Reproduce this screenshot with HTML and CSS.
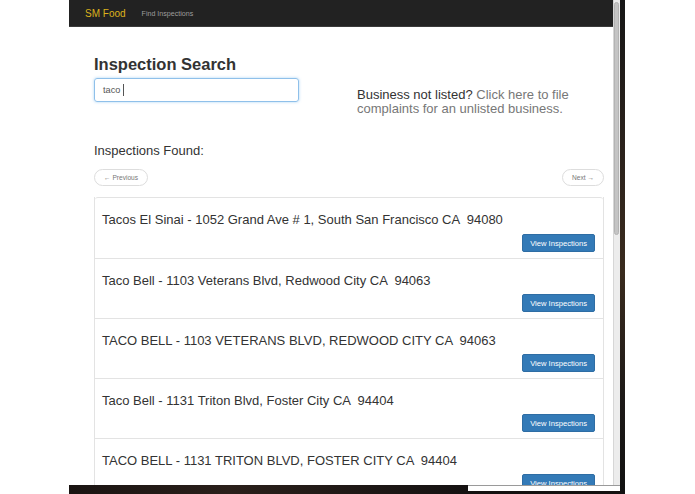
FILE: index.html
```html
<!DOCTYPE html>
<html>
<head>
<meta charset="utf-8">
<link rel="stylesheet" href="styles.css">
</head>
<body>
<div class="screen">
  <div class="gutter"></div>
  <div class="window">
    <div class="main">
      <div class="browser">
        <div class="viewport">
          <div class="navbar">
            <span class="brand">SM Food</span>
            <span class="navlink">Find Inspections</span>
          </div>
          <div class="container">
            <div class="search-row">
              <div class="search-col">
                <h2 class="title">Inspection Search</h2>
                <div class="input"><span class="val">taco</span><span class="caret"></span></div>
              </div>
              <p class="notlisted"><span class="dark">Business not listed?</span> Click here to file complaints for an unlisted business.</p>
            </div>
            <div class="found">Inspections Found:</div>
            <div class="pager">
              <span class="pill">&larr; Previous</span>
              <span class="pill">Next &rarr;</span>
            </div>
            <div class="list">
              <div class="item">
                <div class="name">Tacos El Sinai - 1052 Grand Ave # 1, South San Francisco CA  94080</div>
                <div class="actions"><span class="btn">View Inspections</span></div>
              </div>
              <div class="item">
                <div class="name">Taco Bell - 1103 Veterans Blvd, Redwood City CA  94063</div>
                <div class="actions"><span class="btn">View Inspections</span></div>
              </div>
              <div class="item">
                <div class="name">TACO BELL - 1103 VETERANS BLVD, REDWOOD CITY CA  94063</div>
                <div class="actions"><span class="btn">View Inspections</span></div>
              </div>
              <div class="item">
                <div class="name">Taco Bell - 1131 Triton Blvd, Foster City CA  94404</div>
                <div class="actions"><span class="btn">View Inspections</span></div>
              </div>
              <div class="item">
                <div class="name">TACO BELL - 1131 TRITON BLVD, FOSTER CITY CA  94404</div>
                <div class="actions"><span class="btn">View Inspections</span></div>
              </div>
            </div>
          </div>
        </div>
        <div class="scrollbar"><div class="thumb"></div></div>
      </div>
      <div class="bottom">
        <div class="bottom-dark"></div>
        <div class="bottom-white"></div>
      </div>
    </div>
    <div class="edge"></div>
  </div>
</div>
</body>
</html>
```
FILE: styles.css
```css
html, body {
  margin: 0;
  padding: 0;
  background: #ffffff;
}
body {
  font-family: "Liberation Sans", Arial, sans-serif;
  color: #333;
  width: 695px;
  height: 494px;
  overflow: hidden;
}
.screen {
  display: flex;
  height: 494px;
}
.gutter {
  width: 69px;
  flex: none;
}
.window {
  display: flex;
  width: 556px;
  flex: none;
  height: 494px;
}
.main {
  width: 551px;
  display: flex;
  flex-direction: column;
}
.browser {
  height: 485px;
  display: flex;
  overflow: hidden;
}
.viewport {
  width: 544px;
  height: 485px;
  overflow: hidden;
  background: #fff;
}
.scrollbar {
  width: 7px;
  background: #ececec;
  border-left: 1px solid #d6d6d6;
  box-sizing: border-box;
  padding: 2px 0 0 0;
}
.thumb {
  width: 5px;
  height: 233px;
  background: #c4c4c4;
  border: 1px solid #b3b3b3;
  box-sizing: border-box;
  border-radius: 3px;
}
.edge {
  width: 5px;
  background: linear-gradient(to bottom, #161616 0%, #2b221c 30%, #3a2b1e 55%, #1e1a18 80%, #111 100%);
}
.bottom {
  height: 9px;
  display: flex;
  background: #141110;
}
.bottom-dark {
  width: 399px;
  background: linear-gradient(to right, #1a1412, #2a1f1a 40%, #151212);
}
.bottom-white {
  flex: 1;
  height: 5px;
  background: #fff;
  border-top: 1px solid #9a9a9a;
}

/* navbar */
.navbar {
  height: 27px;
  background: #222;
  border-bottom: 1px solid #3a3a3a;
  box-sizing: border-box;
  display: flex;
  align-items: center;
  padding-left: 16px;
  gap: 16px;
}
.brand {
  color: #dcb21c;
  font-size: 10px;
}
.navlink {
  color: #9d9d9d;
  font-size: 7.1px;
  margin-top: 1px;
}

/* content */
.container {
  padding: 0 9px 0 25px;
}
.search-row {
  display: flex;
  align-items: flex-start;
}
.search-col {
  width: 263px;
  flex: none;
}
.title {
  margin: 27px 0 0 0;
  font-size: 16.5px;
  line-height: 20px;
  font-weight: bold;
  color: #333;
}
.input {
  margin-top: 4px;
  width: 205px;
  height: 24px;
  box-sizing: border-box;
  border: 1px solid #8fc0ea;
  border-radius: 3px;
  box-shadow: 0 0 3px rgba(102, 175, 233, 0.55);
  display: flex;
  align-items: center;
  padding-left: 8px;
  color: #555;
  font-size: 9.2px;
}
.caret {
  width: 1px;
  height: 12px;
  background: #555;
  margin-left: 3px;
}
.notlisted {
  margin: 61px 0 0 0;
  font-size: 13px;
  line-height: 13.5px;
  color: #777;
  width: 230px;
}
.dark {
  color: #333;
}
.found {
  margin-top: 28px;
  font-size: 13px;
  line-height: 16px;
  color: #333;
}
.pager {
  margin-top: 10px;
  display: flex;
  justify-content: space-between;
}
.pill {
  height: 17px;
  box-sizing: border-box;
  border: 1px solid #ddd;
  border-radius: 9px;
  font-size: 6.6px;
  color: #777;
  display: flex;
  align-items: center;
  padding: 0 9px;
}
.list {
  margin-top: 11px;
  border-left: 1px solid #e3e3e3;
  border-right: 1px solid #e3e3e3;
}
.item {
  border-top: 1px solid #e3e3e3;
  padding: 13px 8px 6px 7px;
}
.item:first-child {
  border-radius: 3px 3px 0 0;
}
.item:first-child .actions {
  margin-top: 5px;
}
.name {
  font-size: 13px;
  line-height: 18px;
  color: #333;
  white-space: pre;
}
.actions {
  margin-top: 4px;
  display: flex;
  justify-content: flex-end;
}
.btn {
  height: 18px;
  box-sizing: border-box;
  background: #337ab7;
  border: 1px solid #2e6da4;
  border-radius: 2px;
  color: #fff;
  font-size: 7.6px;
  padding: 0 7px;
  display: flex;
  align-items: center;
}
```
